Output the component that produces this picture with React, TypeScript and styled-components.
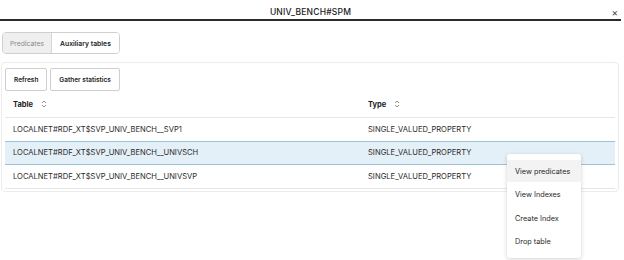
import React from 'react';
import styled, { createGlobalStyle } from 'styled-components';

const GlobalStyle = createGlobalStyle`
  html, body {
    margin: 0;
    padding: 0;
    background: #ffffff;
    font-family: "Inter", "Liberation Sans", Arial, sans-serif;
    color: #1f1f1f;
  }
`;

const Page = styled.div`
  position: relative;
  width: 624px;
  height: 260px;
  overflow: hidden;
`;

const Header = styled.div`
  position: relative;
  width: 621px;
  height: 19px;
  display: flex;
  align-items: center;
  justify-content: center;
  border-bottom: 2px solid #2b2b2b;
`;

const Title = styled.span`
  font-size: 8.5px;
  font-weight: 500;
  letter-spacing: 0.2px;
  color: #222;
  padding-top: 4px;
`;

const Close = styled.span`
  position: absolute;
  right: 3px;
  top: 6px;
  font-size: 10px;
  color: #444;
`;

const Tabs = styled.div`
  display: inline-flex;
  margin: 11px 0 0 2px;
  border: 1px solid #cfcfcf;
  border-radius: 4px;
  overflow: hidden;
  height: 20px;
`;

const Tab = styled.div<{ active?: boolean }>`
  display: flex;
  align-items: center;
  padding: 0 ${(p) => (p.active ? 7 : 8)}px;
  font-size: 6.8px;
  font-weight: ${(p) => (p.active ? 400 : 600)};
  color: ${(p) => (p.active ? '#8a8a8a' : '#222')};
  background: ${(p) => (p.active ? '#efefef' : '#fff')};
  border-right: ${(p) => (p.active ? '1px solid #d6d6d6' : 'none')};
`;

const Panel = styled.div`
  margin: 8px 0 0 1px;
  width: 618px;
  border: 1px solid #ececec;
  border-radius: 4px;
  padding: 5px 3px 2px 3px;
  box-sizing: border-box;
`;

const Toolbar = styled.div`
  display: flex;
  gap: 3px;
`;

const Button = styled.div`
  height: 21px;
  padding: 0 8px;
  display: flex;
  align-items: center;
  border: 1px solid #cfcfcf;
  border-radius: 2px;
  font-size: 6.5px;
  font-weight: 600;
  color: #222;
`;

const Grid = styled.div`
  display: grid;
  grid-template-columns: 355px 1fr;
`;

const HeadCell = styled.div`
  height: 26px;
  display: flex;
  align-items: center;
  gap: 8px;
  padding-left: 8px;
  font-size: 7.5px;
  font-weight: 700;
  color: #222;
  border-bottom: 1px solid #e6e6e6;
`;

const Cell = styled.div<{ selected?: boolean }>`
  height: 22.5px;
  display: flex;
  align-items: center;
  padding-left: 8px;
  font-size: 7.6px;
  color: #2a2a2a;
  background: ${(p) => (p.selected ? '#e4f0f8' : '#fff')};
  border-bottom: 1px solid ${(p) => (p.selected ? '#9cc3dc' : '#e6e6e6')};
  border-top: ${(p) => (p.selected ? '1px solid #9cc3dc' : 'none')};
  margin-top: ${(p) => (p.selected ? '-1px' : '0')};
`;

const Menu = styled.div`
  position: absolute;
  left: 507px;
  top: 154px;
  width: 74px;
  padding: 6px 0 4px 0;
  background: #fff;
  border-radius: 3px;
  box-shadow: 0 1px 4px rgba(0, 0, 0, 0.18);
`;

const MenuItem = styled.div<{ hover?: boolean }>`
  height: 22px;
  margin-bottom: 1.5px;
  display: flex;
  align-items: center;
  padding-left: 8px;
  font-size: 7.3px;
  color: #2a2a2a;
  background: ${(p) => (p.hover ? '#f3f3f3' : 'transparent')};
`;

const SortIcon = () => (
  <svg width="6" height="8" viewBox="0 0 6 8" fill="none" stroke="#777" strokeWidth="0.8">
    <path d="M1 3 L3 1 L5 3" />
    <path d="M1 5 L3 7 L5 5" />
  </svg>
);

const rows = [
  'LOCALNET#RDF_XT$SVP_UNIV_BENCH__SVP1',
  'LOCALNET#RDF_XT$SVP_UNIV_BENCH__UNIVSCH',
  'LOCALNET#RDF_XT$SVP_UNIV_BENCH__UNIVSVP',
];

export default function App() {
  return (
    <Page>
      <GlobalStyle />
      <Header>
        <Title>UNIV_BENCH#SPM</Title>
        <Close>×</Close>
      </Header>
      <Tabs>
        <Tab active>Predicates</Tab>
        <Tab>Auxiliary tables</Tab>
      </Tabs>
      <Panel>
        <Toolbar>
          <Button>Refresh</Button>
          <Button>Gather statistics</Button>
        </Toolbar>
        <Grid>
          <HeadCell>Table <SortIcon /></HeadCell>
          <HeadCell>Type <SortIcon /></HeadCell>
          {rows.map((r, i) => (
            <React.Fragment key={r}>
              <Cell selected={i === 1}>{r}</Cell>
              <Cell selected={i === 1}>SINGLE_VALUED_PROPERTY</Cell>
            </React.Fragment>
          ))}
        </Grid>
      </Panel>
      <Menu>
        <MenuItem hover>View predicates</MenuItem>
        <MenuItem>View Indexes</MenuItem>
        <MenuItem>Create Index</MenuItem>
        <MenuItem>Drop table</MenuItem>
      </Menu>
    </Page>
  );
}
